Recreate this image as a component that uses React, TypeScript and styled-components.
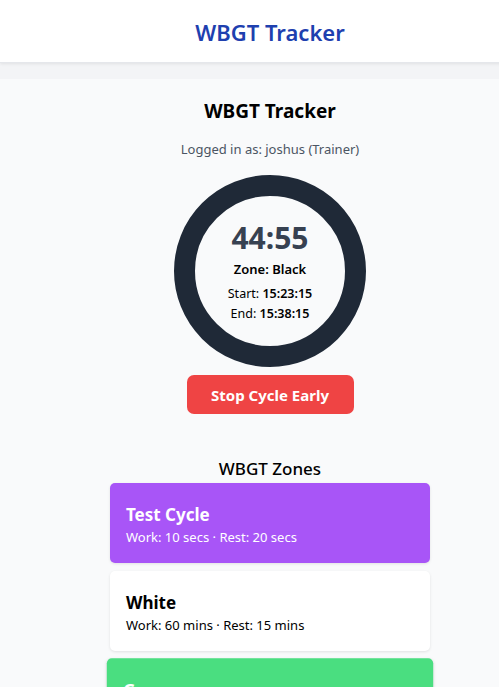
import React from "react";
import styled, { createGlobalStyle } from "styled-components";

const Global = createGlobalStyle`
  html, body { margin: 0; padding: 0; }
  body {
    background: #f3f4f6;
    font-family: "Noto Sans", "Open Sans", sans-serif;
    overflow-x: hidden;
  }
`;

const Header = styled.header`
  height: 62px;
  background: #ffffff;
  border-bottom: 1px solid #e5e7eb;
  box-shadow: 0 1px 3px rgba(0,0,0,0.08);
  display: flex;
  align-items: center;
  justify-content: center;
  width: 540px;
`;

const HeaderTitle = styled.h1`
  margin: 2px 0 0;
  font-size: 22px;
  font-weight: 600;
  color: #1e40af;
`;

const Main = styled.main`
  margin-top: 16px;
  background: #f9fafb;
  width: 540px;
  min-height: 620px;
  display: flex;
  flex-direction: column;
  align-items: center;
  padding-top: 18px;
`;

const PageTitle = styled.h2`
  margin: 0;
  font-size: 19px;
  font-weight: 700;
  color: #000;
  line-height: 28px;
`;

const LoggedIn = styled.p`
  margin: 14px 0 0;
  font-size: 13px;
  color: #4b5563;
  line-height: 20px;
`;

const Ring = styled.div`
  margin-top: 16px;
  width: 192px;
  height: 192px;
  box-sizing: border-box;
  border: 21px solid #1f2937;
  border-radius: 50%;
  display: flex;
  flex-direction: column;
  align-items: center;
  justify-content: center;
`;

const Time = styled.div`
  font-size: 30px;
  font-weight: 700;
  color: #374151;
  line-height: 36px;
`;

const Zone = styled.div`
  margin-top: 4px;
  font-size: 13px;
  font-weight: 600;
  color: #000;
  line-height: 18px;
`;

const TimeLine = styled.div<{ $first?: boolean }>`
  margin-top: ${(p) => (p.$first ? "6px" : "1px")};
  font-size: 12.5px;
  color: #000;
  line-height: 19px;
  b { font-weight: 600; }
`;

const StopButton = styled.button`
  margin-top: 8px;
  width: 167px;
  height: 39px;
  border: none;
  border-radius: 7px;
  background: #ef4444;
  color: #fff;
  font-family: inherit;
  font-size: 15px;
  font-weight: 700;
  cursor: pointer;
`;

const ZonesTitle = styled.h3`
  margin: 44px 0 0;
  font-size: 17px;
  font-weight: 500;
  color: #000;
  line-height: 22px;
`;

const CardList = styled.div`
  margin-top: 3px;
  display: flex;
  flex-direction: column;
  gap: 8px;
  align-items: center;
`;

const Card = styled.div<{ $bg: string; $fg: string; $active?: boolean }>`
  width: 320px;
  height: 80px;
  box-sizing: border-box;
  padding: 20px 16px 16px;
  border-radius: 5px;
  background: ${(p) => p.$bg};
  color: ${(p) => p.$fg};
  box-shadow: 0 1px 3px rgba(0,0,0,0.1);
  transform: ${(p) => (p.$active ? "scale(1.02)" : "none")};
`;

const CardTitle = styled.div`
  font-size: 17px;
  font-weight: 700;
  line-height: 24px;
`;

const CardSub = styled.div`
  margin-top: 1px;
  font-size: 13px;
  line-height: 18px;
`;

const zones = [
  { name: "Test Cycle", sub: "Work: 10 secs · Rest: 20 secs", bg: "#a855f7", fg: "#fff" },
  { name: "White", sub: "Work: 60 mins · Rest: 15 mins", bg: "#ffffff", fg: "#000" },
  { name: "Green", sub: "Work: 50 mins · Rest: 10 mins", bg: "#4ade80", fg: "#fff", active: true },
];

export default function App() {
  return (
    <>
      <Global />
      <Header>
        <HeaderTitle>WBGT Tracker</HeaderTitle>
      </Header>
      <Main>
        <PageTitle>WBGT Tracker</PageTitle>
        <LoggedIn>Logged in as: joshus (Trainer)</LoggedIn>
        <Ring>
          <Time>44:55</Time>
          <Zone>Zone: Black</Zone>
          <TimeLine $first>Start: <b>15:23:15</b></TimeLine>
          <TimeLine>End: <b>15:38:15</b></TimeLine>
        </Ring>
        <StopButton>Stop Cycle Early</StopButton>
        <ZonesTitle>WBGT Zones</ZonesTitle>
        <CardList>
          {zones.map((z) => (
            <Card key={z.name} $bg={z.bg} $fg={z.fg} $active={z.active}>
              <CardTitle>{z.name}</CardTitle>
              <CardSub>{z.sub}</CardSub>
            </Card>
          ))}
        </CardList>
      </Main>
    </>
  );
}
